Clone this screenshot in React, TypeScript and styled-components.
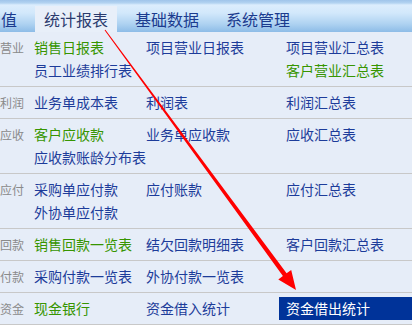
import styled, { createGlobalStyle } from 'styled-components';

const GlobalStyle = createGlobalStyle`
	html, body {
		margin: 0;
		padding: 0;
		background: #ffffff;
	}
`;

const Page = styled.div`
	position: relative;
	width: 412px;
	height: 328px;
	overflow: hidden;
	background: #ffffff;
	font-family: 'Noto Sans CJK SC', 'Noto Sans', sans-serif;
`;

const Header = styled.div`
	height: 32px;
	display: flex;
	align-items: flex-end;
	gap: 9px;
	background: linear-gradient(
		to bottom,
		#9fc4ea 0,
		#b3d3f1 3px,
		#dcedfd 5px,
		#d2e8fb 13px,
		#aed2f1 24px,
		#8dbce7 32px
	);
`;

const Tab = styled.div<{ $active?: boolean; $first?: boolean }>`
	height: 26px;
	display: flex;
	align-items: center;
	padding: 0 9px;
	margin-left: ${(p) => (p.$first ? '-8px' : '0')};
	font-size: 16px;
	white-space: nowrap;
	color: ${(p) => (p.$active ? '#2b3b6e' : '#1b3b8e')};
	background: ${(p) => (p.$active ? '#e8eff9' : 'transparent')};
`;

const Panel = styled.div`
	background: #e6edf8;
`;

const Row = styled.div`
	display: flex;
	padding: 4px 0;
	border-bottom: 1px solid #c8c8c8;
`;

const Label = styled.div`
	flex: none;
	width: 27px;
	padding-right: 3px;
	box-sizing: border-box;
	text-align: right;
	white-space: nowrap;
	font-size: 12px;
	line-height: 23px;
	color: #8a8a8a;
`;

const Grid = styled.div`
	flex: 1;
	display: grid;
	grid-template-columns: 112px 140px 1fr;
	grid-auto-rows: 23px;
`;

type Tone = 'blue' | 'green' | 'active';

const toneColor: Record<Tone, string> = {
	blue: '#1d3c9a',
	green: '#379500',
	active: '#ffffff',
};

const Item = styled.div<{ $tone: Tone }>`
	padding: 0 7px;
	font-size: 14px;
	line-height: 23px;
	white-space: nowrap;
	color: ${(p) => toneColor[p.$tone]};
	background: ${(p) => (p.$tone === 'active' ? '#003399' : 'transparent')};
`;

const Arrow = styled.svg`
	position: absolute;
	left: 0;
	top: 0;
	pointer-events: none;
`;

type Cell = [string, Tone] | null;

interface Section {
	label: string;
	lines: Cell[][];
}

const sections: Section[] = [
	{
		label: '营业',
		lines: [
			[['销售日报表', 'green'], ['项目营业日报表', 'blue'], ['项目营业汇总表', 'blue']],
			[['员工业绩排行表', 'blue'], null, ['客户营业汇总表', 'green']],
		],
	},
	{
		label: '利润',
		lines: [[['业务单成本表', 'blue'], ['利润表', 'blue'], ['利润汇总表', 'blue']]],
	},
	{
		label: '应收',
		lines: [
			[['客户应收款', 'green'], ['业务单应收款', 'blue'], ['应收汇总表', 'blue']],
			[['应收款账龄分布表', 'blue'], null, null],
		],
	},
	{
		label: '应付',
		lines: [
			[['采购单应付款', 'blue'], ['应付账款', 'blue'], ['应付汇总表', 'blue']],
			[['外协单应付款', 'blue'], null, null],
		],
	},
	{
		label: '回款',
		lines: [[['销售回款一览表', 'green'], ['结欠回款明细表', 'blue'], ['客户回款汇总表', 'blue']]],
	},
	{
		label: '付款',
		lines: [[['采购付款一览表', 'blue'], ['外协付款一览表', 'blue'], null]],
	},
	{
		label: '资金',
		lines: [[['现金银行', 'green'], ['资金借入统计', 'blue'], ['资金借出统计', 'active']]],
	},
];

const tabs = ['值', '统计报表', '基础数据', '系统管理'];

// tapered red arrow drawn over the menu
const arrowPoints = () => {
	const sx = 105;
	const sy = 30;
	const tx = 296;
	const ty = 290;
	const len = Math.hypot(tx - sx, ty - sy);
	const dx = (tx - sx) / len;
	const dy = (ty - sy) / len;
	const nx = dy;
	const ny = -dx;
	const bx = tx - 19 * dx;
	const by = ty - 19 * dy;
	const pts = [
		[sx + 0.5 * nx, sy + 0.5 * ny],
		[bx + 2.3 * nx, by + 2.3 * ny],
		[bx + 8 * nx, by + 8 * ny],
		[tx, ty],
		[bx - 8 * nx, by - 8 * ny],
		[bx - 2.3 * nx, by - 2.3 * ny],
		[sx - 0.5 * nx, sy - 0.5 * ny],
	];
	return pts.map(([x, y]) => `${x.toFixed(1)},${y.toFixed(1)}`).join(' ');
};

const App = () => {
	return (
		<>
			<GlobalStyle />
			<Page>
				<Header>
					{tabs.map((t, i) => (
						<Tab key={t} $first={i === 0} $active={i === 1}>
							{t}
						</Tab>
					))}
				</Header>

				<Panel>
					{sections.map((s) => (
						<Row key={s.label}>
							<Label>{s.label}</Label>
							<Grid>
								{s.lines.flat().map((c, i) =>
									c ? (
										<Item key={i} $tone={c[1]}>
											{c[0]}
										</Item>
									) : (
										<div key={i} />
									)
								)}
							</Grid>
						</Row>
					))}
				</Panel>

				<Arrow width='412' height='328' viewBox='0 0 412 328'>
					<polygon points={arrowPoints()} fill='#ff0000' />
				</Arrow>
			</Page>
		</>
	);
};

export default App;
